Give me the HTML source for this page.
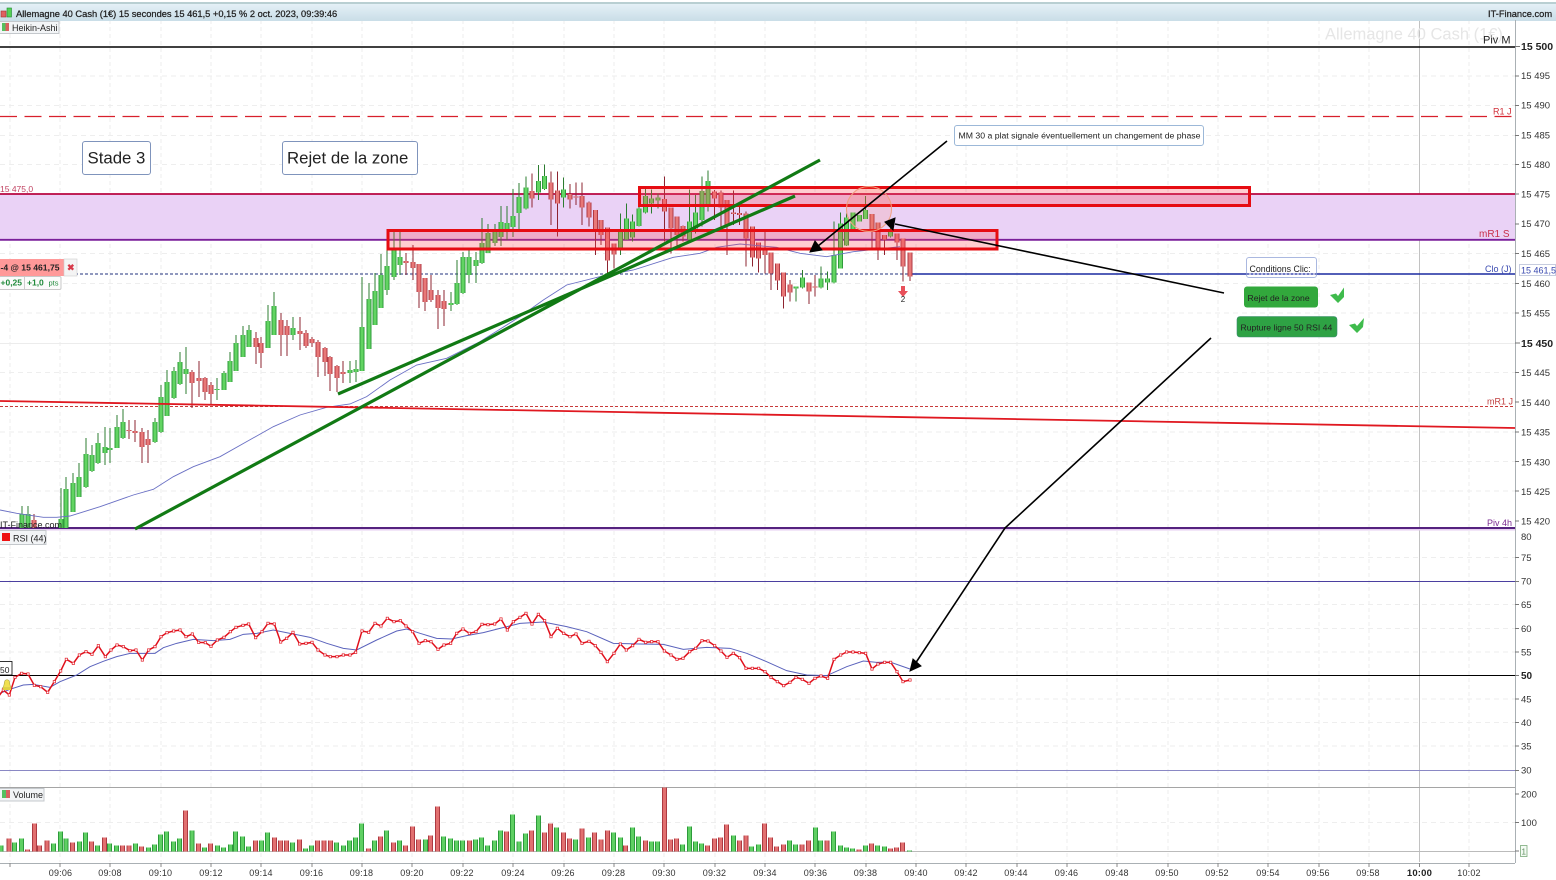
<!DOCTYPE html>
<html lang="fr"><head><meta charset="utf-8"><title>Allemagne 40 Cash</title>
<style>
html,body{margin:0;padding:0;background:#fff;width:1556px;height:880px;overflow:hidden}
svg{display:block;filter:blur(.3px)}
text{font-family:"Liberation Sans",sans-serif;fill:#222}
.ax{font-size:9.5px;fill:#333}
.t{font-size:9px;fill:#333;text-anchor:middle;letter-spacing:.2px}
.c{shape-rendering:crispEdges}
</style></head><body>
<svg width="1556" height="880" viewBox="0 0 1556 880" xmlns="http://www.w3.org/2000/svg">
<defs>
<linearGradient id="top" x1="0" y1="0" x2="0" y2="1"><stop offset="0" stop-color="#e4f0f6"/><stop offset="1" stop-color="#c9dde7"/></linearGradient>
<marker id="m" markerUnits="userSpaceOnUse" markerWidth="12" markerHeight="12" refX="6" refY="6" viewBox="0 0 12 12"><rect x="2.5" y="2.5" width="7" height="7" fill="#fff" stroke="#e0101c" stroke-width="2"/></marker>
<path id="gb1" d="M22 514V528M28 514V528M61 519V528M66 489V528M73 483V512M79 477V497M86 454V487M92 455V471M98 443V463M105 447V453M110 448V450M117 427V448M123 422V438M155 422V442M161 397V432M167 382V416M174 371V398M180 362V384M186 369V374M217 389V390M224 373V390M230 361V382M236 343V371M243 335V357M249 330V347M268 321V348M274 306V335M293 328V335M350 370V373M356 369V372M362 327V371M369 299V349M375 291V325M381 275V308M387 266V290M394 248V277M400 257V265M451 303V305M457 283V304M463 257V293M469 257V275M476 260V266M482 243V263M488 233V253M495 232V243M501 222V237M507 223V230M513 216V227M519 197V213"/>
<path id="rb1" d="M34 520V528M129 430V431M135 431V433M142 432V447M148 439V445M192 372V383M199 378V381M205 378V392M211 385V394M256 338V347M261 343V353M281 320V335M287 326V335M300 331V334M306 333V346M312 339V343M318 342V357M325 348V362M330 357V374M337 366V378M343 372V374M406 261V263M413 262V268M419 264V292M425 278V302M431 290V300M438 295V308M444 301V309"/>
<path id="gb2" transform="translate(500 120) scale(.33333)" vector-effect="non-scaling-stroke" d="M78 202V265M115 183V217M134 168V207M191 208V233M361 335V385M379 295V358M398 305V352M417 265V318M437 228V278M455 235V250M474 232V242M569 305V358M587 277V325M606 213V300M624 183V255M888 499V506M907 472V503M963 475V503M983 475V487M1002 405V487M1022 310V445M1040 292V377M1059 278V333M1078 285V305M1097 270V297M1172 333V350"/>
<path id="rb2" transform="translate(500 120) scale(.33333)" vector-effect="non-scaling-stroke" d="M96 213V236M153 187V238M172 212V250M210 222V238M228 229V232M246 228V262M267 247V292M286 270V330M303 300V345M322 322V422M342 370V403M493 237V275M513 262V325M531 290V345M549 318V350M644 215V235M663 218V262M681 240V315M700 278V282M719 279V285M738 280V355M757 320V412M776 367V415M795 385V405M813 397V460M832 430V482M851 458V530M870 493V517M927 488V515M945 500V503M1116 282V333M1134 307V382M1154 345V358M1191 340V368M1209 355V440M1230 397V470"/>
<path id="gv" transform="translate(0 600) scale(.33333)" vector-effect="non-scaling-stroke" d="M3 737V755M44 727V755M65 715V755M161 730V755M182 695V755M198 715V755M238 724V755M257 697V755M292 737V755M329 730V755M349 737V755M406 730V755M445 743V755M464 733V755M482 703V755M500 695V755M521 724V755M539 715V755M576 691V755M614 742V755M652 737V755M670 742V755M691 733V755M707 694V755M727 709V755M746 739V755M784 721V755M802 697V755M878 727V755M917 745V755M935 737V755M1009 727V755M1030 737V755M1048 721V755M1066 712V755M1085 670V755M1123 721V755M1160 691V755M1199 721V755M1276 718V755M1330 709V755M1352 715V755M1370 721V755M1387 721V755M1426 718V755M1444 712V755M1463 737V755M1484 721V755M1502 691V755M1538 643V755M1557 724V755M1577 700V755M1615 646V755M1670 682V755M1726 718V755M1765 712V755M1840 697V755M1861 712V755M1898 682V755M1915 709V755M1954 724V755M1972 724V755M2048 733V755M2068 679V755M2087 724V755M2104 730V755M2200 706V755M2255 739V755M2275 733V755M2369 721V755M2386 733V755M2446 682V755M2461 721V755M2501 694V755M2521 736V755M2539 742V755M2558 745V755M2596 736V755M2632 736V755M2654 739V755M2729 751V755"/>
<path id="rv" transform="translate(0 600) scale(.33333)" vector-effect="non-scaling-stroke" d="M27 715V755M82 748V755M103 670V755M119 737V755M141 721V755M218 727V755M275 724V755M314 712V755M368 737V755M387 737V755M425 740V755M557 632V755M596 730V755M632 730V755M767 721V755M823 712V755M842 721V755M860 721V755M899 718V755M952 721V755M972 721V755M991 721V755M1105 745V755M1142 709V755M1180 727V755M1216 736V755M1238 679V755M1256 718V755M1292 706V755M1313 619V755M1408 721V755M1520 694V755M1595 691V755M1633 697V755M1652 670V755M1690 697V755M1708 715V755M1746 685V755M1784 697V755M1803 718V755M1822 691V755M1877 736V755M1936 721V755M1993 563V755M2012 718V755M2029 715V755M2123 736V755M2143 715V755M2161 712V755M2180 673V755M2218 721V755M2238 706V755M2293 670V755M2311 712V755M2330 739V755M2350 733V755M2406 733V755M2425 721V755M2481 721V755M2577 748V755M2614 730V755M2672 745V755M2690 742V755M2708 727V755"/>
</defs>

<rect width="1556" height="880" fill="#fff"/>
<!-- grid -->
<path d="M10 20V862M60 20V862M110 20V862M161 20V862M211 20V862M261 20V862M312 20V862M362 20V862M412 20V862M463 20V862M513 20V862M564 20V862M614 20V862M664 20V862M715 20V862M765 20V862M815 20V862M866 20V862M916 20V862M966 20V862M1017 20V862M1067 20V862M1117 20V862M1168 20V862M1218 20V862M1268 20V862M1319 20V862M1369 20V862M1469 20V862" stroke="#eeeeee" stroke-dasharray="4 3" fill="none"/>
<path d="M0 76H1515M0 105.500H1515M0 135.500H1515M0 164.500H1515M0 224H1515M0 253.500H1515M0 283.500H1515M0 313H1515M0 372.500H1515M0 432H1515M0 461.500H1515M0 491H1515M0 557.500H1515M0 604.500H1515M0 628.500H1515M0 652H1515M0 699H1515M0 722.500H1515M0 746H1515M0 822.500H1515" stroke="#eeeeee" stroke-dasharray="5 4" fill="none"/>
<path d="M0 343.500H1515" stroke="#ececec"/>
<path d="M1419.500 20V862" stroke="#c2c2c2"/>

<!-- top bar -->
<rect x="0" y="2" width="1556" height="2" fill="#b9cfd2"/>
<rect x="0" y="4" width="1556" height="17" fill="url(#top)"/>
<rect x="1" y="11" width="5" height="6" fill="#e06060" stroke="#a03030" stroke-width=".6"/>
<rect x="7" y="8" width="4.500" height="9" fill="#55d055" stroke="#1d8a2d" stroke-width=".6"/>
<text x="16" y="17" font-size="9.300" stroke="#222" stroke-width=".25">Allemagne 40 Cash (1€) 15 secondes 15 461,5 +0,15 % 2 oct. 2023, 09:39:46</text>
<text x="1488" y="17" font-size="9.300" stroke="#222" stroke-width=".25">IT-Finance.com</text>
<rect x="-1" y="21.500" width="60" height="12" fill="#f2f4f6" stroke="#c4c8cc"/>
<rect x="2" y="23" width="3.500" height="8" fill="#55c060"/><rect x="5.500" y="23" width="3.500" height="8" fill="#d86060"/>
<text x="12" y="31" font-size="9">Heikin-Ashi</text>

<!-- band and price lines -->
<rect x="0" y="194" width="1515" height="46" fill="#ead2f6"/>
<text x="1325" y="39.500" font-size="16.500" style="fill:#e6e6e6">Allemagne 40 Cash (1€)</text>
<path d="M0 47H1515" stroke="#000" stroke-width="1.500"/>
<path d="M0 116.500H1515" stroke="#d8202c" stroke-width="1.300" stroke-dasharray="17 7.500"/>
<path d="M0 194H1515" stroke="#b8053f" stroke-width="1.800"/>
<path d="M0 239.800H1515" stroke="#7a1f9a" stroke-width="1.800"/>
<path d="M0 274H1515" stroke="#20307c" stroke-dasharray="3 2"/>
<path d="M909 274H1515" stroke="#1a2aa0" stroke-width="1.500"/>
<path d="M0 406.500H1515" stroke="#c83a3a" stroke-dasharray="3 2"/>
<rect x="0" y="529" width="1515" height="1.500" fill="#e6cef0"/>
<path d="M0 528H1515" stroke="#55227f" stroke-width="2"/>
<path d="M0 581.500H1515" stroke="#4b3fa0"/>
<path d="M0 675.500H1515" stroke="#000" stroke-width="1.100"/>
<path d="M0 770.500H1515" stroke="#8a88c4"/>
<path d="M0 787.500H1515" stroke="#a5a5a5"/>
<path d="M0 851.500H1515" stroke="#bbb"/>
<path d="M0 863.500H1515M1515.500 20V863" stroke="#aab0b4"/>

<!-- wicks -->
<g class="c">
<path d="M22 506V528M28 506V528M61 488V528M66 477V528M73 473V512M79 463V497M86 438V488M92 445V472M98 433V464M105 427V465M110 428V463M117 415V448M123 409V439M155 418V443M161 385V433M167 370V416M174 367V399M180 352V385M186 347V394M217 378V400M224 371V390M230 352V382M236 335V371M243 326V357M249 325V347M268 305V348M274 292V335M293 317V340M350 361V383M356 360V382M362 277V371M369 283V349M375 273V325M381 254V308M387 250V295M394 230V280M400 230V275M451 292V311M457 260V305M463 252V294M469 250V283M476 252V283M482 218V264M488 224V253M495 224V246M501 206V246M507 206V240M513 189V237M519 183V230" stroke="#2c7c30" fill="none"/>
<path d="M34 514V528M129 420V439M135 420V442M142 428V463M148 430V463M192 370V408M199 361V397M205 377V400M211 382V404M256 332V364M261 337V368M281 313V356M287 320V356M300 317V350M306 330V348M312 337V347M318 340V377M325 347V376M330 356V391M337 365V392M343 361V383M406 253V275M413 245V280M419 264V308M425 278V311M431 275V302M438 290V329M444 290V326" stroke="#8e2430" fill="none"/>
<path transform="translate(500 120) scale(.33333)" vector-effect="non-scaling-stroke" d="M78 170V268M115 135V240M134 133V210M191 172V262M361 280V405M379 250V360M398 283V365M417 200V320M437 205V280M455 208V280M474 220V265M569 208V365M587 225V340M606 170V320M624 152V275M888 500V545M907 450V505M963 440V505M983 455V510M1002 305V490M1022 278V445M1040 280V378M1059 278V335M1078 285V305M1097 228V297M1172 315V352" stroke="#2c7c30" fill="none"/>
<path transform="translate(500 120) scale(.33333)" vector-effect="non-scaling-stroke" d="M96 160V262M153 155V315M172 155V350M210 192V265M228 188V255M246 187V315M267 245V320M286 270V405M303 300V375M322 322V460M342 370V445M493 170V365M513 262V400M531 290V380M549 316V365M644 210V300M663 212V320M681 240V405M700 212V315M719 255V315M738 275V440M757 320V440M776 367V458M795 330V460M813 397V510M832 430V510M851 458V565M870 480V545M927 488V552M945 465V530M1116 282V385M1134 307V420M1154 345V405M1191 340V420M1209 355V485M1230 397V483" stroke="#8e2430" fill="none"/>
<!-- bodies -->
<g fill="none" stroke-width="5" stroke="#2f9b3b"><use href="#gb1"/><use href="#gb2"/></g>
<g fill="none" stroke-width="3" stroke="#62d462"><use href="#gb1"/><use href="#gb2"/></g>
<g fill="none" stroke-width="5" stroke="#b03a44"><use href="#rb1"/><use href="#rb2"/></g>
<g fill="none" stroke-width="3" stroke="#e87878"><use href="#rb1"/><use href="#rb2"/></g>
</g>

<!-- moving average -->
<path transform="translate(0 240) scale(.33333)" vector-effect="non-scaling-stroke" fill="none" stroke="#6a70c4" stroke-width=".9" d="M0 810L50 820L130 832L170 832L210 828L300 800L400 765L460 748L520 710L580 680L660 650L740 605L820 560L900 525L980 502L1050 492L1100 470L1170 420L1250 375L1340 355L1440 305L1560 230"/>
<path transform="translate(500 120) scale(.33333)" vector-effect="non-scaling-stroke" fill="none" stroke="#6a70c4" stroke-width=".9" d="M20 600L60 590L130 540L200 495L320 465L400 450L520 412L600 400L650 382L720 372L830 382L900 400L980 410L1060 395L1200 380"/>

<!-- red zones -->
<rect x="388" y="230.500" width="609" height="18.500" fill="rgba(255,70,80,.27)" stroke="#e60c12" stroke-width="3"/>
<rect x="639.500" y="187.500" width="610" height="18" fill="rgba(255,70,80,.27)" stroke="#e60c12" stroke-width="3"/>
<circle cx="869" cy="209" r="22.500" fill="rgba(255,120,70,.14)" stroke="#f0a080" stroke-width="1"/>

<!-- trend lines -->
<path d="M0 401L1515 428" stroke="#e01820" stroke-width="1.800"/>
<path d="M338 394L795 196M135 529L820 160" stroke="#117a14" stroke-width="3.200" fill="none"/>
<path d="M947 141L818 246M1224 293L895 224M1211 338L1005 528L915 664" stroke="#000" stroke-width="1.600" fill="none"/>
<path d="M810 252L815 241L822 250ZM885 222L895 218L893 230ZM910 671L913 659L921 666Z" fill="#000" stroke="#000"/>

<!-- signal -->
<path d="M901 286H905V291H908L903 297L898 291H901Z" fill="#e8505a"/>
<text x="903" y="302" font-size="8" text-anchor="middle">2</text>

<!-- annotation boxes -->
<rect x="82.500" y="141.500" width="68" height="33" rx="2.500" fill="#fff" stroke="#7f94bc"/>
<text x="87.500" y="163.500" font-size="16.800">Stade 3</text>
<rect x="282.500" y="141.500" width="135" height="33" rx="2.500" fill="#fff" stroke="#7f94bc"/>
<text x="287" y="163.500" font-size="16.800">Rejet de la zone</text>
<rect x="954.500" y="125.500" width="249" height="20" rx="2.500" fill="#fff" stroke="#9cb8d8"/>
<text x="958.500" y="138.500" font-size="8.700">MM 30 a plat signale éventuellement un changement de phase</text>
<rect x="1246.500" y="257.500" width="70" height="20" rx="2.500" fill="#fff" stroke="#aab8e0"/>
<text x="1249.500" y="272" font-size="8.800">Conditions Clic:</text>
<path d="M1246.500 274H1316.500" stroke="#1a2aa0" stroke-width="1.300" stroke-dasharray="3 1"/>
<rect x="1244" y="286.500" width="74" height="21" rx="3" fill="#32a83c"/>
<text x="1247.500" y="301" font-size="8.600">Rejet de la zone</text>
<rect x="1237" y="316.500" width="100" height="20.500" rx="3" fill="#2ea244" stroke="#3a8a70" stroke-width=".6"/>
<text x="1240.500" y="330.500" font-size="8.600">Rupture ligne 50 RSI 44</text>
<path d="M1330 295L1336 293.500L1338 296L1344 287.500L1344 297L1338 303Z" fill="#3fbb4c"/>
<path d="M1349 325L1355 323.500L1357 326L1364 318L1363 327L1357 333Z" fill="#3fbb4c"/>

<!-- line labels -->
<text x="1483" y="43.500" font-size="11">Piv M</text>
<text x="1493" y="114.500" font-size="9" style="fill:#d0303a">R1 J</text>
<text x="1479" y="237" font-size="10" style="fill:#c8304a">mR1 S</text>
<text x="1485" y="272" font-size="9" style="fill:#3a4ab0">Clo (J)</text>
<text x="1487" y="404.500" font-size="9" style="fill:#c04040">mR1 J</text>
<text x="1487" y="526" font-size="9" style="fill:#7a2a90">Piv 4h</text>
<text x="0" y="192" font-size="8.500" style="fill:#c04060">15 475,0</text>

<!-- position tag -->
<rect x="0" y="259" width="64" height="17" fill="#f99" />
<rect x="64" y="259" width="13" height="17" fill="#f4f4f4" stroke="#ccc" stroke-width=".6"/>
<text x="0.500" y="270.500" font-size="8.600" font-weight="700">-4 @ 15 461,75</text>
<text x="67" y="270.500" font-size="9" font-weight="700" style="fill:#d83a4a">✖</text>
<rect x="-1" y="276.500" width="62" height="13" rx="1.500" fill="#fbfbfb" stroke="#c8c8c8"/>
<path d="M24.500 277V289" stroke="#ccc"/>
<text x="0.500" y="285.500" font-size="8.500" font-weight="700" style="fill:#1f8a3a">+0,25</text>
<text x="27" y="285.500" font-size="8.500" font-weight="700" style="fill:#1f8a3a">+1,0</text>
<text x="48.500" y="285.500" font-size="7.500" style="fill:#1f8a3a">pts</text>

<text x="0" y="528" font-size="9">IT-Finance.com</text>
<rect x="-1" y="530.500" width="47" height="14" fill="#f2f4f6" stroke="#c4c8cc"/>
<rect x="2" y="533" width="8" height="8" fill="#ee1111"/>
<text x="13" y="541.500" font-size="9">RSI (44)</text>

<!-- RSI -->
<g fill="none" transform="translate(0 600) scale(.33333)">
<path stroke="#5a62bc" stroke-width="3" d="M0 280L30 268L70 255L100 253L150 262L180 245L230 225L270 200L310 184L350 170L390 160L430 160L465 160L490 143L530 130L580 118L640 122L690 118L730 103L770 100L820 90L870 100L930 112L980 130L1030 145L1070 150L1130 120L1190 93L1220 87L1260 100L1310 115L1355 117L1400 107L1450 98L1500 85L1560 70L1630 66L1700 80L1760 95L1840 130L1920 132L1990 133L2050 148L2120 142L2190 145L2240 160L2300 185L2360 212L2420 225L2480 227L2540 200L2590 183L2630 187L2670 186L2730 207"/>
<path stroke="#e0101c" stroke-width="4.500" marker-start="url(#m)" marker-mid="url(#m)" marker-end="url(#m)" d="M-5 290L10 270L28 285L45 232L65 220L84 222L103 256L122 260L143 277L163 245L182 213L199 178L220 190L238 165L258 155L276 163L295 137L316 170L333 150L351 135L370 140L390 152L408 150L427 180L446 150L465 140L483 110L501 98L521 93L540 90L558 110L577 102L596 127L616 128L633 139L652 120L672 112L691 95L708 82L729 76L746 72L767 113L786 95L804 70L823 72L842 126L860 115L879 97L899 132L918 130L936 127L954 150L975 165L991 170L1011 170L1030 165L1050 165L1067 157L1086 93L1106 97L1125 70L1143 78L1162 55L1182 65L1201 62L1218 78L1238 95L1257 130L1276 122L1293 125L1314 148L1332 135L1352 130L1370 100L1389 87L1408 100L1428 95L1446 73L1464 74L1484 72L1503 57L1522 90L1540 65L1560 52L1578 40L1596 72L1615 43L1634 62L1653 110L1672 85L1691 100L1710 110L1728 102L1746 130L1767 124L1786 137L1803 157L1822 185L1842 160L1861 132L1879 150L1898 137L1917 118L1937 127L1955 125L1974 125L1993 153L2013 165L2031 178L2049 175L2069 155L2087 145L2106 122L2124 123L2144 137L2163 153L2181 172L2200 160L2219 173L2238 205L2257 205L2276 205L2295 215L2313 232L2332 245L2351 257L2370 247L2388 232L2407 238L2427 250L2445 235L2463 228L2483 235L2502 178L2522 165L2540 156L2559 156L2578 158L2597 160L2616 207L2634 192L2654 187L2672 187L2691 215L2709 245L2730 240"/>
</g>
<rect x="-1" y="661.500" width="13" height="13.500" fill="#fff" stroke="#000" stroke-width=".8"/>
<text x="0" y="673" font-size="8.500">50</text>
<path d="M2 688C3 688 4 686 4.500 682C5 679 9 679 9.500 682C10 686 11 688 12 688Z" fill="#f0e050" stroke="#a8a040" stroke-width=".6"/>
<rect x="3" y="688" width="8" height="2" fill="#e0d040"/>

<!-- Volume -->
<rect x="-1" y="788.500" width="45" height="12.500" fill="#f2f4f6" stroke="#c4c8cc"/>
<rect x="2" y="790" width="4" height="8" fill="#55c060"/><rect x="6" y="790" width="4" height="8" fill="#d86060"/>
<text x="13" y="798" font-size="9">Volume</text>
<g class="c">
<g fill="none" stroke-width="5" stroke="#2d9a3b"><use href="#gv"/></g>
<g fill="none" stroke-width="3" stroke="#5fd063"><use href="#gv"/></g>
<g fill="none" stroke-width="5" stroke="#ad3a42"><use href="#rv"/></g>
<g fill="none" stroke-width="3" stroke="#e27070"><use href="#rv"/></g>
</g>

<!-- axis ticks -->
<path d="M1515 46.500h5M1515 76h4M1515 105.500h4M1515 135.500h4M1515 164.500h4M1515 194h4M1515 224h4M1515 253.500h4M1515 283.500h4M1515 313h4M1515 343h5M1515 372.500h4M1515 402h4M1515 432h4M1515 461.500h4M1515 491h4M1515 521h4M1515 557.500h4M1515 581.500h4M1515 604.500h4M1515 628.500h4M1515 652h4M1515 675.500h4M1515 699h4M1515 722.500h4M1515 746h4M1515 770.500h4M1515 794h4M1515 822.500h4M1515 851h4" stroke="#777" fill="none"/>
<g class="ax">
<text class="ax" x="1521" y="50" style="font-size:10.500px;font-weight:700;fill:#222">15 500</text>
<text class="ax" x="1521" y="79">15 495</text><text class="ax" x="1521" y="108.500">15 490</text>
<text class="ax" x="1521" y="138.500">15 485</text><text class="ax" x="1521" y="168">15 480</text>
<text class="ax" x="1521" y="197.500">15 475</text><text class="ax" x="1521" y="227">15 470</text>
<text class="ax" x="1521" y="257">15 465</text><text class="ax" x="1521" y="287">15 460</text>
<text class="ax" x="1521" y="316.500">15 455</text>
<text class="ax" x="1521" y="347" style="font-size:10.500px;font-weight:700;fill:#222">15 450</text>
<text class="ax" x="1521" y="376">15 445</text><text class="ax" x="1521" y="406">15 440</text>
<text class="ax" x="1521" y="435.500">15 435</text><text class="ax" x="1521" y="465.500">15 430</text>
<text class="ax" x="1521" y="495">15 425</text><text class="ax" x="1521" y="524.500">15 420</text>
<text class="ax" x="1521" y="540">80</text><text class="ax" x="1521" y="561">75</text>
<text class="ax" x="1521" y="584.500">70</text><text class="ax" x="1521" y="608">65</text>
<text class="ax" x="1521" y="632">60</text><text class="ax" x="1521" y="655.500">55</text>
<text class="ax" x="1521" y="679" style="font-weight:700;font-size:10px;fill:#222">50</text>
<text class="ax" x="1521" y="702.500">45</text><text class="ax" x="1521" y="726">40</text>
<text class="ax" x="1521" y="749.500">35</text><text class="ax" x="1521" y="773.500">30</text>
<text class="ax" x="1521" y="797.500">200</text><text class="ax" x="1521" y="826">100</text>
</g>
<rect x="1520.500" y="845.500" width="6.500" height="11" fill="#f4fbf4" stroke="#7aaa7a" stroke-width=".8"/>
<text x="1521.500" y="854.500" font-size="8" style="fill:#5a8a5a">1</text>
<rect x="1519.500" y="264.500" width="36" height="11" fill="#fff" stroke="#b8c0d8" stroke-width=".8"/>
<text x="1521" y="273.500" font-size="9" style="fill:#3a4ab0">15 461,5</text>

<!-- time axis -->
<path d="M10 863v4M60 863v4M110 863v4M161 863v4M211 863v4M261 863v4M312 863v4M362 863v4M412 863v4M463 863v4M513 863v4M564 863v4M614 863v4M664 863v4M715 863v4M765 863v4M815 863v4M866 863v4M916 863v4M966 863v4M1017 863v4M1067 863v4M1117 863v4M1168 863v4M1218 863v4M1268 863v4M1319 863v4M1369 863v4M1419.500 863v4M1469 863v4" stroke="#888" fill="none"/>
<text class="t" x="60.500" y="876">09:06</text><text class="t" x="110" y="876">09:08</text>
<text class="t" x="160.500" y="876">09:10</text><text class="t" x="211" y="876">09:12</text>
<text class="t" x="261" y="876">09:14</text><text class="t" x="311.500" y="876">09:16</text>
<text class="t" x="361.500" y="876">09:18</text><text class="t" x="412" y="876">09:20</text>
<text class="t" x="462" y="876">09:22</text><text class="t" x="513" y="876">09:24</text>
<text class="t" x="563" y="876">09:26</text><text class="t" x="613.500" y="876">09:28</text>
<text class="t" x="664" y="876">09:30</text><text class="t" x="714.500" y="876">09:32</text>
<text class="t" x="765" y="876">09:34</text><text class="t" x="815.500" y="876">09:36</text>
<text class="t" x="865.500" y="876">09:38</text><text class="t" x="916" y="876">09:40</text>
<text class="t" x="966" y="876">09:42</text><text class="t" x="1016" y="876">09:44</text>
<text class="t" x="1066.500" y="876">09:46</text><text class="t" x="1117" y="876">09:48</text>
<text class="t" x="1167" y="876">09:50</text><text class="t" x="1217" y="876">09:52</text>
<text class="t" x="1268" y="876">09:54</text><text class="t" x="1318" y="876">09:56</text>
<text class="t" x="1368" y="876">09:58</text>
<text class="t" x="1419.500" y="876" style="font-weight:700;font-size:9.500px;fill:#222">10:00</text>
<text class="t" x="1469" y="876">10:02</text>
</svg>
</body></html>
